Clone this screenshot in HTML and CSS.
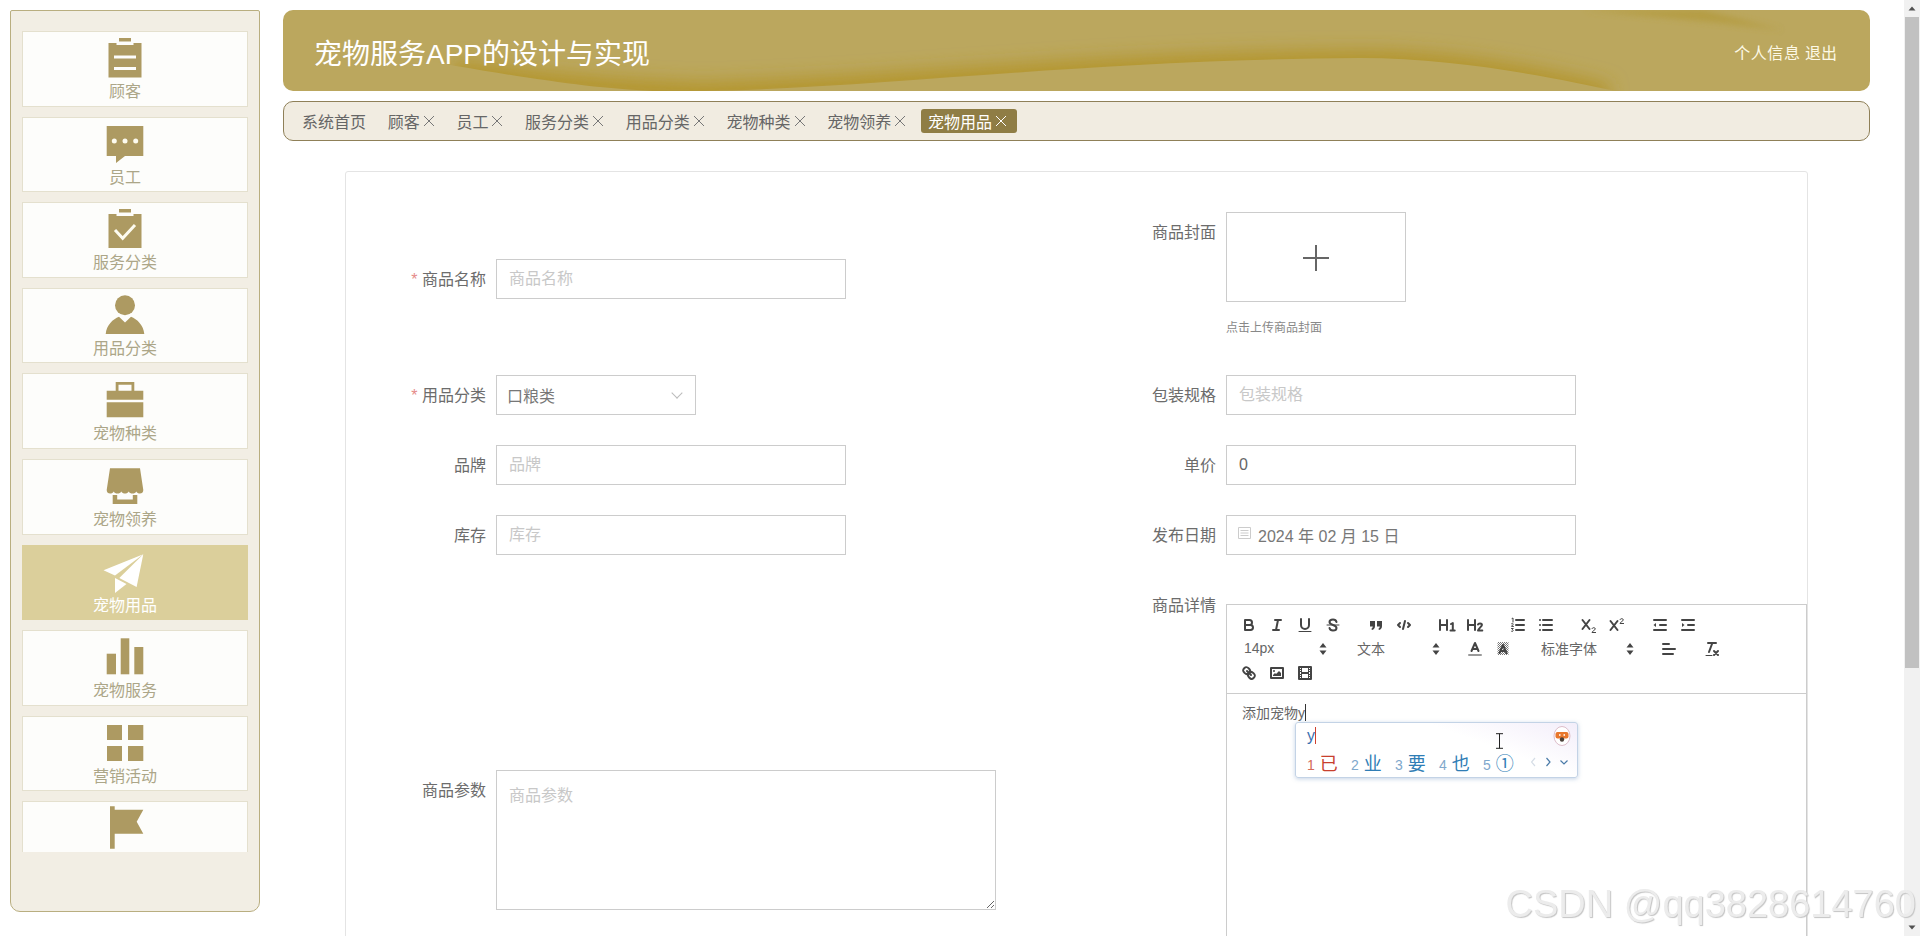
FILE: index.html
```html
<!DOCTYPE html>
<html lang="zh-CN">
<head>
    <meta charset="UTF-8">
    <meta name="viewport" content="width=device-width, initial-scale=1.0">
    <title>宠物服务APP的设计与实现</title>
    <link rel="stylesheet" href="styles.css">
</head>
<body>
<div class="app">
    <aside class="sidebar">
        <div class="menu">
            <a class="menu-item">
                <svg class="menu-icon" viewBox="0 0 40 40"><path d="M14 0h12v3.500h-12z"/><path fill-rule="evenodd" d="M3.500 5h8v2h17v-2h8v34.500h-33zM9 17.500v3h22v-3zM9 29v3h22v-3z"/></svg>
                <span>顾客</span>
            </a>
            <a class="menu-item">
                <svg class="menu-icon" viewBox="0 0 40 40"><path fill-rule="evenodd" d="M1.700 2h36.600v30h-18.300l-9 7v-7h-9.300z"/><circle class="cut" cx="9.300" cy="17" r="2.500"/><circle class="cut" cx="20" cy="17" r="2.500"/><circle class="cut" cx="30.700" cy="17" r="2.500"/></svg>
                <span>员工</span>
            </a>
            <a class="menu-item">
                <svg class="menu-icon" viewBox="0 0 40 40"><path d="M14 0h12v3.500h-12z"/><path d="M3.500 5h8v2h17v-2h8v34h-33z"/><path class="cut-line" d="M10 21l7.700 8.300 12.300-13.300"/></svg>
                <span>服务分类</span>
            </a>
            <a class="menu-item">
                <svg class="menu-icon" viewBox="0 0 40 40"><circle cx="20" cy="10.300" r="10"/><path d="M.7 39c.8-9 7.300-15 13.300-17.300l6 5.800 6-5.800c6 2.300 12.500 8.300 13.300 17.300z"/></svg>
                <span>用品分类</span>
            </a>
            <a class="menu-item">
                <svg class="menu-icon" viewBox="0 0 40 40"><path fill-rule="evenodd" d="M10.700 2h18.600v8.700h9v9h-36.600v-9h9zM13.500 4.800v5.900h13v-5.900z"/><path d="M1.700 22.300h36.600v15h-36.600z"/></svg>
                <span>宠物种类</span>
            </a>
            <a class="menu-item">
                <svg class="menu-icon" viewBox="0 0 40 40"><path d="M5 2.300h30l3.300 21.700c0 2.500-1.500 3.500-3.400 3.500-1.600 0-2.800-.6-3.600-2-.8 1.400-2 2-3.800 2-1.700 0-3-.6-3.800-2-.8 1.400-2.200 2-3.700 2s-2.900-.6-3.700-2c-.8 1.400-2.100 2-3.800 2-1.800 0-3-.6-3.800-2-.8 1.400-2 2-3.600 2-1.900 0-3.400-1-3.400-3.500z"/><path d="M7.700 29h4.500v4.500h15.600v-4.500h4.500v9h-24.600z"/></svg>
                <span>宠物领养</span>
            </a>
            <a class="menu-item active">
                <svg class="menu-icon" viewBox="0 0 40 40"><path d="M38.300 2.300l-39.800 16 11.500 5.200z"/><path d="M38.300 2.300l-24 23.700 17.300 9z"/><path d="M10 26v15l11.500-9z"/></svg>
                <span>宠物用品</span>
            </a>
            <a class="menu-item">
                <svg class="menu-icon" viewBox="0 0 40 40"><path d="M1.700 16.700h9.300v20.600h-9.300z"/><path d="M15.700 1.300h8.600v36h-8.600z"/><path d="M29.300 10h9v27.300h-9z"/></svg>
                <span>宠物服务</span>
            </a>
            <a class="menu-item">
                <svg class="menu-icon" viewBox="0 0 40 40"><path d="M2 2h15v15h-15z"/><path d="M23 2h15.300v15h-15.300z"/><path d="M2 23h15v15h-15z"/><path d="M23 23h15.300v15h-15.300z"/></svg>
                <span>营销活动</span>
            </a>
            <a class="menu-item">
                <svg class="menu-icon" viewBox="0 0 40 40"><path d="M5 -1.700h4.700v3.400h28.600l-6.600 12 6.600 12h-28.600v15h-4.700z"/></svg>
            </a>
        </div>
    </aside>

    <main class="main">
        <header class="topbar">
            <svg class="topbar-wave" viewBox="0 0 1587 81" preserveAspectRatio="none">
                <defs>
                    <filter id="waveBlur" x="-10%" y="-100%" width="120%" height="300%"><feGaussianBlur stdDeviation="9"/></filter>
                    <filter id="streakBlur" x="-20%" y="-200%" width="140%" height="500%"><feGaussianBlur stdDeviation="3"/></filter>
                    <clipPath id="waveClip"><path d="M0 0H1587V81H1333C1280 70 1180 48 1077 48C800 50 600 78 420 81H370C300 78 230 66 110 45L0 30Z"/></clipPath>
                </defs>
                <g clip-path="url(#waveClip)">
                    <path class="wave-band" filter="url(#waveBlur)" d="M170 62C240 71 300 80 420 84C600 80 800 54 1077 52C1180 52 1270 72 1325 86"/>
                </g>
                <path class="wave-streak" filter="url(#streakBlur)" d="M1300 0L1420 0L1500 20L1430 12Z"/>
            </svg>
            <div class="topbar-title">宠物服务APP的设计与实现</div>
            <div class="topbar-user"><span class="user-info">个人信息</span> <span>退出</span></div>
        </header>

        <nav class="tabs">
            <a class="tab">系统首页</a>
            <a class="tab">顾客<svg class="tab-x" viewBox="0 0 12 12"><path d="M1 1l10 10M11 1l-10 10"/></svg></a>
            <a class="tab">员工<svg class="tab-x" viewBox="0 0 12 12"><path d="M1 1l10 10M11 1l-10 10"/></svg></a>
            <a class="tab">服务分类<svg class="tab-x" viewBox="0 0 12 12"><path d="M1 1l10 10M11 1l-10 10"/></svg></a>
            <a class="tab">用品分类<svg class="tab-x" viewBox="0 0 12 12"><path d="M1 1l10 10M11 1l-10 10"/></svg></a>
            <a class="tab">宠物种类<svg class="tab-x" viewBox="0 0 12 12"><path d="M1 1l10 10M11 1l-10 10"/></svg></a>
            <a class="tab">宠物领养<svg class="tab-x" viewBox="0 0 12 12"><path d="M1 1l10 10M11 1l-10 10"/></svg></a>
            <a class="tab active">宠物用品<svg class="tab-x" viewBox="0 0 12 12"><path d="M1 1l10 10M11 1l-10 10"/></svg></a>
        </nav>

        <section class="card">
            <form class="form-grid">
                <div class="field">
                    <label class="field-label"><i>*</i> 商品名称</label>
                    <input class="input" type="text" placeholder="商品名称">
                </div>
                <div class="field">
                    <label class="field-label">商品封面</label>
                    <div class="upload">
                        <div class="upload-box"><svg viewBox="0 0 28 28"><path d="M14 1v26M1 14h26"/></svg></div>
                        <p class="upload-hint">点击上传商品封面</p>
                    </div>
                </div>

                <div class="field">
                    <label class="field-label"><i>*</i> 用品分类</label>
                    <div class="select-wrap">
                        <select class="input select"><option>口粮类</option></select>
                    </div>
                </div>
                <div class="field">
                    <label class="field-label">包装规格</label>
                    <input class="input" type="text" placeholder="包装规格">
                </div>

                <div class="field">
                    <label class="field-label">品牌</label>
                    <input class="input" type="text" placeholder="品牌">
                </div>
                <div class="field">
                    <label class="field-label">单价</label>
                    <input class="input" type="text" value="0">
                </div>

                <div class="field">
                    <label class="field-label">库存</label>
                    <input class="input" type="text" placeholder="库存">
                </div>
                <div class="field">
                    <label class="field-label">发布日期</label>
                    <div class="input date">
                        <svg class="date-icon" viewBox="0 0 13 12"><path d="M.5.5h12v11h-12zM2.500 3.500h8M2.500 6h8M2.500 8.500h8"/></svg>
                        <span>2024 年 02 月 15 日</span>
                    </div>
                </div>

                <div class="field">
                    <label class="field-label">商品参数</label>
                    <textarea class="textarea" placeholder="商品参数"></textarea>
                </div>
                <div class="field">
                    <label class="field-label">商品详情</label>
                    <div class="editor">
                        <div class="toolbar">
                            <div class="toolbar-row">
                                <span class="formats">
                                    <button type="button" class="tool"><svg viewBox="0 0 18 18"><path d="M5 4h4.500a2.500 2.500 0 0 1 0 5h-4.500z"/><path d="M5 9h5.500a2.500 2.500 0 0 1 0 5h-5.500z"/></svg></button>
                                    <button type="button" class="tool"><svg viewBox="0 0 18 18"><path d="M7 4h6M5 14h6M8 14l2-10"/></svg></button>
                                    <button type="button" class="tool"><svg viewBox="0 0 18 18"><path d="M5 3v6a4 4 0 0 0 8 0v-6"/><path class="thin" d="M3 15.500h12"/></svg></button>
                                    <button type="button" class="tool"><svg viewBox="0 0 18 18"><path d="M12.500 6c-.4-1.600-1.800-2.500-3.500-2.500-2 0-3.500 1-3.500 2.600 0 1.400 1.300 2.200 3.500 2.900 2.200.7 3.500 1.500 3.500 3 0 1.500-1.500 2.500-3.500 2.500-1.700 0-3.100-.9-3.500-2.500"/><path class="thin" d="M3 9h12"/></svg></button>
                                </span>
                                <span class="formats">
                                    <button type="button" class="tool"><svg viewBox="0 0 18 18"><path class="solid" d="M3 5h5v5c0 2-1 3.500-3 4l-.7-1.200c1-.5 1.400-1.200 1.500-2.300h-2.800z"/><path class="solid" d="M10 5h5v5c0 2-1 3.500-3 4l-.7-1.200c1-.5 1.400-1.200 1.500-2.300h-2.800z"/></svg></button>
                                    <button type="button" class="tool"><svg viewBox="0 0 18 18"><path d="M5 7l-2 2 2 2M13 7l2 2-2 2M10 5l-2 8"/></svg></button>
                                </span>
                                <span class="formats">
                                    <button type="button" class="tool"><svg viewBox="0 0 18 18"><path d="M2 4v10M9 4v10M2 9h7M13 8l1.800-1v7.500M12.500 14.500h4.200"/></svg></button>
                                    <button type="button" class="tool"><svg viewBox="0 0 18 18"><path d="M2 4v10M9 4v10M2 9h7M12 8.500c.3-1.200 3.800-1.800 4 .3.100 1.700-3.800 3.800-4 5.700h4.300"/></svg></button>
                                </span>
                                <span class="formats">
                                    <button type="button" class="tool"><svg viewBox="0 0 18 18"><path d="M7 4h8M7 9h8M7 14h8"/><path class="thin" d="M3 2.500l1-.5v4M2.500 7.700c.8-.7 2-.2 1.600.7l-1.600 2h2M2.500 12.500h1.800l-1 1.200c1 0 1.300 1.600-.1 1.800-.3 0-.6-.1-.8-.3"/></svg></button>
                                    <button type="button" class="tool"><svg viewBox="0 0 18 18"><path d="M6 4h9M6 9h9M6 14h9M3 4h.01M3 9h.01M3 14h.01"/></svg></button>
                                </span>
                                <span class="formats">
                                    <button type="button" class="tool"><svg viewBox="0 0 18 18"><path d="M2.500 4l7 9M9.500 4l-7 9"/><path class="thin" d="M12 12.500c.3-1.200 3.300-1.300 3.300.4 0 1.300-3 1.900-3.300 3.600h3.600"/></svg></button>
                                    <button type="button" class="tool"><svg viewBox="0 0 18 18"><path d="M2.500 5l7 9M9.500 5l-7 9"/><path class="thin" d="M12 3.500c.3-1.200 3.300-1.300 3.300.4 0 1.300-3 1.900-3.300 3.600h3.600"/></svg></button>
                                </span>
                                <span class="formats">
                                    <button type="button" class="tool"><svg viewBox="0 0 18 18"><path d="M3 14h12M3 4h12M9 9h6"/><path class="solid" d="M5 7v4l-2.500-2z"/></svg></button>
                                    <button type="button" class="tool"><svg viewBox="0 0 18 18"><path d="M3 14h12M3 4h12M9 9h6"/><path class="solid" d="M3 7v4l2.500-2z"/></svg></button>
                                </span>
                            </div>
                            <div class="toolbar-row">
                                <span class="formats">
                                    <span class="picker">14px<svg class="sort" viewBox="0 0 8 14"><path d="M4 1l3.500 4.500h-7zM4 13l-3.500-4.500h7z"/></svg></span>
                                </span>
                                <span class="formats">
                                    <span class="picker">文本<svg class="sort" viewBox="0 0 8 14"><path d="M4 1l3.500 4.500h-7zM4 13l-3.500-4.500h7z"/></svg></span>
                                </span>
                                <span class="formats">
                                    <button type="button" class="tool"><svg viewBox="0 0 18 18"><path d="M5.500 11l3.500-8 3.500 8M6.400 9h5.200"/><path class="color" d="M3 15h12"/></svg></button>
                                    <button type="button" class="tool"><svg viewBox="0 0 18 18"><defs><pattern id="hatch" width="2" height="2" patternUnits="userSpaceOnUse" stroke="none"><rect width="1" height="1" fill="#777"/><rect x="1" y="1" width="1" height="1" fill="#777"/></pattern></defs><rect x="3.500" y="2" width="11" height="13" fill="url(#hatch)" stroke="none"/><path d="M5.500 13l3.500-8 3.500 8M6.400 11h5.200"/></svg></button>
                                </span>
                                <span class="formats">
                                    <span class="picker picker-wide">标准字体<svg class="sort" viewBox="0 0 8 14"><path d="M4 1l3.500 4.500h-7zM4 13l-3.500-4.500h7z"/></svg></span>
                                </span>
                                <span class="formats">
                                    <button type="button" class="tool"><svg viewBox="0 0 18 18"><path d="M3 4h6M3 9h12M3 14h10"/></svg></button>
                                </span>
                                <span class="formats">
                                    <button type="button" class="tool"><svg viewBox="0 0 18 18"><path d="M5 3h8M6 12l3.350-9M11 11l4 4M15 11l-4 4"/><path class="thin" d="M3 15.500h6"/></svg></button>
                                </span>
                            </div>
                            <div class="toolbar-row">
                                <span class="formats">
                                    <button type="button" class="tool"><svg viewBox="0 0 18 18"><path d="M7 7l4 4"/><path d="M8.900 4.577a3.476 3.476 0 0 1 .36 4.679 3.476 3.476 0 0 1-4.683-.356c-1.392-1.400-2.542-2.500-.36-4.683s3.283-1.032 4.683.36z"/><path d="M13.423 9.100a3.476 3.476 0 0 0-4.679-.36 3.476 3.476 0 0 0 .36 4.679c1.392 1.392 2.500 2.542 4.679.36s1.032-3.279-.36-4.679z"/></svg></button>
                                    <button type="button" class="tool"><svg viewBox="0 0 18 18"><rect x="3" y="4" width="12" height="10"/><circle class="solid" cx="6" cy="7" r="1"/><path class="solid" d="M5 12v-1l2-2 1 1 3-3 2 2v3z"/></svg></button>
                                    <button type="button" class="tool"><svg viewBox="0 0 18 18"><rect x="3" y="3" width="12" height="12"/><path class="solid" d="M5 3h1v12h-1zM12 3h1v12h-1zM5 8h8v2h-8zM3 5h3v1h-3zM3 7h3v1h-3zM3 10h3v1h-3zM3 12h3v1h-3zM12 5h3v1h-3zM12 7h3v1h-3zM12 10h3v1h-3zM12 12h3v1h-3z"/></svg></button>
                                </span>
                            </div>
                        </div>
                        <div class="editor-body">
                            <p class="editor-line">添加宠物y<span class="caret"></span></p>
                            <div class="ime">
                                <div class="ime-top">
                                    <span class="ime-input">y<span class="ime-caret"></span></span>
                                    <svg class="ime-logo" viewBox="0 0 18 20"><ellipse cx="9" cy="10" rx="8" ry="9.500" fill="#fff" stroke="#dcbcc8"/><rect x="2.500" y="6" width="13" height="6.500" rx="2" fill="#e8772c"/><path d="M6 8h1.500v2h-1.500zM10.500 8h1.500v2h-1.500z" fill="#fbe3cf"/><circle cx="9" cy="13.500" r="2.200" fill="#4a4038"/></svg>
                                </div>
                                <div class="ime-list">
                                    <span class="ime-cand first"><b>1</b>已</span>
                                    <span class="ime-cand"><b>2</b>业</span>
                                    <span class="ime-cand"><b>3</b>要</span>
                                    <span class="ime-cand"><b>4</b>也</span>
                                    <span class="ime-cand"><b>5</b>①</span>
                                    <svg class="ime-nav" viewBox="0 0 42 10"><path class="off" d="M4 1l-3.500 4 3.500 4"/><path d="M15.500 1l3.500 4-3.500 4"/><path d="M29.500 3.500l3.500 3.500 3.500-3.500"/></svg>
                                </div>
                            </div>
                            <svg class="ibeam" viewBox="0 0 9 16"><path d="M1 .7h7M4.500 .7v14.600M1 15.300h7"/></svg>
                        </div>
                    </div>
                </div>
            </form>
        </section>
    </main>

    <div class="scrollbar">
        <div class="scroll-arrow"><svg viewBox="0 0 8 5"><path d="M4 .5l3.500 4h-7z"/></svg></div>
        <div class="scroll-track"><div class="scroll-thumb"></div></div>
        <div class="scroll-arrow"><svg viewBox="0 0 8 5"><path d="M4 4.500l-3.500-4h7z"/></svg></div>
    </div>
</div>
<div class="watermark">CSDN @qq3828614760</div>
</body>
</html>
```

FILE: styles.css
```css
* {
    box-sizing: border-box;
}
html, body {
    margin: 0;
    height: 100%;
    overflow: hidden;
}
body {
    font-family: "Liberation Sans", "Noto Sans CJK SC", sans-serif;
    font-size: 16px;
    color: #666;
    background-color: #fff;
}
.app {
    display: flex;
    height: 936px;
    overflow: hidden;
}

/* left menu */
.sidebar {
    flex: none;
    width: 250px;
    height: 902px;
    margin: 10px 0 0 10px;
    padding: 20px 11px 0;
    background-color: #f2eee4;
    border: 1px solid #b9ae80;
    border-radius: 2px 2px 10px 10px;
}
.menu {
    display: flex;
    flex-direction: column;
    gap: 10px;
    height: 821px;
    overflow: hidden;
}
.menu-item {
    flex: none;
    display: flex;
    flex-direction: column;
    align-items: center;
    height: 75.6px;
    padding: 6px 20px 0 0;
    color: #aca688;
    line-height: 22px;
    background-color: #fdfdfb;
    border: 1px solid #e4e0ce;
}
.menu-icon {
    display: block;
    width: 40px;
    height: 40px;
    margin-bottom: 3px;
    fill: #ad9a62;
    overflow: visible;
}
.menu-icon .cut {
    fill: #fdfbf0;
}
.menu-icon .cut-line {
    fill: none;
    stroke: #fdfbf0;
    stroke-width: 3;
}
.menu-item.active {
    color: #fff;
    background-color: #dbcf9b;
    border-color: #dbcf9b;
}
.menu-item.active .menu-icon {
    fill: #fff;
}

/* top */
.main {
    flex: none;
    width: 1644px;
    padding: 10px 34px 0 23px;
}
.topbar {
    position: relative;
    display: flex;
    align-items: center;
    justify-content: space-between;
    height: 81px;
    padding: 2px 33px 0 31px;
    color: #fff;
    background-color: #bba75e;
    border-radius: 10px;
    overflow: hidden;
}
.topbar-wave {
    position: absolute;
    left: 0;
    top: 0;
    width: 100%;
    height: 100%;
}
.wave-band {
    fill: none;
    stroke: #b3942a;
    stroke-width: 22;
}
.wave-streak {
    fill: #b39a3a;
    opacity: .75;
}
.topbar-title {
    position: relative;
    font-size: 28px;
}
.topbar-user {
    position: relative;
    color: #fdf9e6;
}
.user-info {
    letter-spacing: .6px;
}
.tabs {
    display: flex;
    align-items: center;
    gap: 4.700px;
    height: 40px;
    margin-top: 10px;
    padding: 0 11px;
    background-color: #f1ece1;
    border: 1px solid #8f8058;
    border-radius: 10px;
}
.tab {
    display: flex;
    align-items: center;
    height: 24px;
    padding: 0 10px 0 7px;
    color: #666;
    border-radius: 3px;
}
.tab-x {
    width: 12px;
    height: 12px;
    margin-left: 3px;
    fill: none;
    stroke: #777;
}
.tab.active {
    color: #fff;
    background-color: #8f7d45;
}
.tab.active .tab-x {
    stroke: #fff;
}

/* form */
.card {
    width: 1463px;
    margin: 30px 0 0 62px;
    padding-top: 40px;
    background-color: #fff;
    border: 1px solid #e4e4e4;
    border-radius: 3px;
}
.form-grid {
    display: grid;
    grid-template-columns: 730px 1fr;
    row-gap: 30px;
    align-items: center;
}
.field {
    display: flex;
    align-items: flex-start;
    padding-left: 20px;
}
.field-label {
    flex: none;
    width: 120px;
    height: 40px;
    margin-right: 10px;
    line-height: 42px;
    text-align: right;
    color: #6c6c6c;
}
.field-label i {
    color: #e58a8a;
    font-style: normal;
}
.input {
    display: block;
    width: 350px;
    height: 40px;
    padding: 0 12px;
    font: inherit;
    color: #666;
    background-color: #fff;
    border: 1px solid #ccc;
    border-radius: 0;
    outline: none;
}
.input::placeholder, .textarea::placeholder {
    color: #c8c8c8;
}
.select-wrap {
    position: relative;
    width: 200px;
}
.select-wrap::after {
    content: "";
    position: absolute;
    right: 15px;
    top: 14px;
    width: 7px;
    height: 7px;
    border-right: 1px solid #bbb;
    border-bottom: 1px solid #bbb;
    transform: rotate(45deg);
}
.select {
    width: 100%;
    appearance: none;
    padding: 2px 0 0 10px;
    color: #777;
}
.date {
    display: flex;
    align-items: center;
    padding-left: 11px;
    color: #777;
}
.date-icon {
    width: 13px;
    height: 12px;
    margin: -4px 7px 0 0;
    fill: none;
    stroke: #ccc;
}
.textarea {
    display: block;
    width: 500px;
    height: 140px;
    padding: 11px 12px 10px;
    font: inherit;
    color: #666;
    border: 1px solid #ccc;
    border-radius: 0;
    outline: none;
}
.upload-box {
    display: flex;
    align-items: center;
    justify-content: center;
    width: 180px;
    height: 90px;
    border: 1px solid #ccc;
}
.upload-box svg {
    width: 28px;
    height: 28px;
    margin-top: 2px;
    fill: none;
    stroke: #666;
    stroke-width: 2;
}
.upload-hint {
    margin: 17px 0 8px;
    font-size: 12px;
    line-height: 18px;
    color: #888;
}

/* rich text editor */
.editor {
    width: 581px;
    height: 491px;
    margin-top: 19px;
    border: 1px solid #ccc;
    display: flex;
    flex-direction: column;
}
.toolbar {
    flex: none;
    padding: 8px;
    border-bottom: 1px solid #ccc;
}
.toolbar-row {
    display: flex;
    height: 24px;
}
.formats {
    display: flex;
    margin-right: 15px;
}
.tool {
    display: flex;
    align-items: center;
    justify-content: center;
    width: 28px;
    height: 24px;
    padding: 0;
    background: none;
    border: 0;
}
.tool svg {
    width: 18px;
    height: 18px;
    fill: none;
    stroke: #444;
    stroke-width: 2;
    stroke-linecap: round;
    stroke-linejoin: round;
}
.tool svg .thin {
    stroke-width: 1;
}
.tool svg .solid {
    fill: #444;
    stroke: none;
}
.tool svg .color {
    stroke: #999;
}
.picker {
    position: relative;
    display: flex;
    align-items: center;
    width: 98px;
    height: 22px;
    padding-left: 9px;
    font-size: 14px;
    color: #666;
}
.picker-wide {
    width: 108px;
}
.sort {
    position: absolute;
    right: 6px;
    top: 5px;
    width: 8px;
    height: 14px;
    fill: #444;
}
.editor-body {
    position: relative;
    flex: 1;
    padding: 9px 15px;
}
.editor-line {
    margin: 0;
    font-size: 14px;
    line-height: 21px;
    color: #666;
}
.caret {
    display: inline-block;
    width: 1px;
    height: 17px;
    vertical-align: -3px;
    background-color: #333;
}

/* input method popup */
.ime {
    position: absolute;
    left: 68px;
    top: 28px;
    width: 283px;
    height: 56px;
    padding: 1px 10px 0 11px;
    background: linear-gradient(200deg, #f3eefa 0%, #fff 35%);
    border: 1px solid #c3d3e6;
    border-radius: 3px;
    box-shadow: 0 1px 4px rgba(90, 130, 180, .35);
}
.ime-top {
    display: flex;
    align-items: center;
    justify-content: space-between;
    height: 24px;
}
.ime-input {
    font-size: 16px;
    color: #3a6fb0;
}
.ime-caret {
    display: inline-block;
    width: 1px;
    height: 17px;
    vertical-align: -3px;
    background-color: #d0402e;
}
.ime-logo {
    width: 18px;
    height: 20px;
    margin-right: -4px;
}
.ime-list {
    display: flex;
    align-items: center;
    height: 26px;
    margin-top: 1px;
}
.ime-cand {
    flex: none;
    width: 44px;
    font-size: 18px;
    color: #2f7db5;
}
.ime-cand b {
    margin-right: 5px;
    font-size: 14px;
    font-weight: normal;
    color: #7fa8cc;
}
.ime-cand.first {
    color: #c8402e;
}
.ime-cand.first b {
    color: #d46a5a;
}
.ime-nav {
    flex: none;
    width: 42px;
    height: 10px;
    margin-left: 4px;
    fill: none;
    stroke: #4a7ba8;
    stroke-width: 1.200;
}
.ime-nav .off {
    stroke: #d5dde6;
}
.ibeam {
    position: absolute;
    left: 268px;
    top: 39px;
    width: 9px;
    height: 16px;
    fill: none;
    stroke: #222;
}

/* fake page scrollbar */
.scrollbar {
    flex: none;
    display: flex;
    flex-direction: column;
    width: 16px;
    background-color: #f1f1f1;
}
.scroll-arrow {
    flex: none;
    display: flex;
    align-items: center;
    justify-content: center;
    height: 17px;
}
.scroll-arrow svg {
    width: 8px;
    height: 5px;
    fill: #505050;
}
.scroll-track {
    flex: 1;
    padding: 0 1px;
}
.scroll-thumb {
    height: 651px;
    background-color: #c1c1c1;
}

.watermark {
    position: fixed;
    right: 4px;
    top: 882px;
    font-size: 38px;
    line-height: 44px;
    white-space: nowrap;
    color: #ececec;
    text-shadow: 1px 1px 1px #c4c4c4;
}
```
